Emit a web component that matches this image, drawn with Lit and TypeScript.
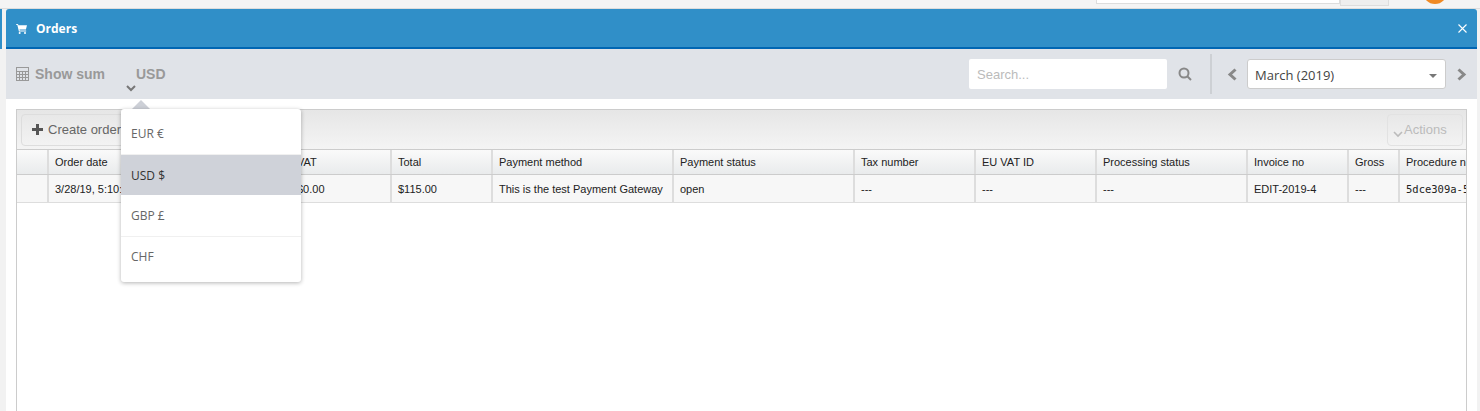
import { LitElement, html, css } from "lit";
import { customElement } from "lit/decorators.js";

const cols: [string, string, number][] = [
  ["", "", 32],
  ["Order date", "3/28/19, 5:10:", 242],
  ["VAT", "$0.00", 101],
  ["Total", "$115.00", 101],
  ["Payment method", "This is the test Payment Gateway", 181],
  ["Payment status", "open", 181],
  ["Tax number", "---", 121],
  ["EU VAT ID", "---", 121],
  ["Processing status", "---", 151],
  ["Invoice no", "EDIT-2019-4", 101],
  ["Gross", "---", 51],
  ["Procedure no", "5dce309a-5", 80],
];

@customElement("app-root")
export class AppRoot extends LitElement {
  static styles = css`
    :host { display: block; width: 1480px; height: 411px; overflow: hidden; position: relative; background: #f2f2f2; font-family: "Liberation Sans", Arial, sans-serif; }
    .top { height: 8px; background: #f4f4f4; border-bottom: 1px solid #ddd; position: relative; }
    .tinput { position: absolute; left: 1096px; top: -5px; width: 244px; height: 9px; background: #fff; border: 1px solid #ddd; box-sizing: border-box; }
    .tbtn { position: absolute; left: 1340px; top: -5px; width: 49px; height: 11px; background: #eee; border: 1px solid #ddd; box-sizing: border-box; }
    .avatar { position: absolute; left: 1423px; top: -20px; width: 24px; height: 24px; border-radius: 50%; background: #f08a24; }
    .edge { position: absolute; left: 0; top: 9px; width: 2px; height: 40px; background: #308fc8; }
    .window { margin: 0 0 0 6px; width: 1474px; box-sizing: border-box; }
    .win { width: 1471px; }
    .head { height: 38px; background: #308fc8; border-bottom: 2px solid #0066b3; border-radius: 3px 3px 0 0; display: flex; align-items: center; color: #fff; font-family: "Open Sans", sans-serif; font-weight: 700; font-size: 12px; padding: 0 10px 0 10px; box-sizing: content-box; }
    .head .t { margin-left: 9px; flex: 1; }
    .bar { height: 50px; background: #e0e3e8; display: flex; align-items: center; padding: 0 10px; box-sizing: border-box; color: #999; font-weight: 700; font-size: 14px; }
    .sum { display: flex; align-items: center; gap: 6px; width: 120px; }
    .cur { position: relative; width: 120px; }
    .chev { position: absolute; left: -10px; top: 19px; }
    .spacer { flex: 1; }
    .search { width: 198px; height: 30px; background: #fff; border-radius: 2px; color: #bbb; font-weight: 400; font-size: 13px; display: flex; align-items: center; padding-left: 8px; box-sizing: border-box; }
    .mag { margin: 0 18px 0 11px; }
    .sep { width: 2px; height: 40px; background: #cdd0d4; margin-right: 15px; }
    .sel { width: 199px; height: 30px; margin: 0 11px 0 10px; background: #fff; border: 1px solid #ccc; border-radius: 3px; box-sizing: border-box; display: flex; align-items: center; justify-content: space-between; padding: 1px 8px 0 7px; color: #444; font-family: "Open Sans", sans-serif; font-weight: 400; font-size: 13px; }
    .caret { width: 0; height: 0; border: 4px solid transparent; border-top: 4px solid #777; border-bottom: 0; margin-top: 2px; }
    .body { height: 313px; background: #fff; padding: 10px 10px 0 10px; box-sizing: border-box; }
    .grid { height: 303px; width: 1451px; border: 1px solid #ccc; border-bottom: 0; box-sizing: border-box; overflow: hidden; }
    .tool { height: 39px; background: linear-gradient(#e6e6e6, #f4f4f4); border-bottom: 1px solid #ccc; display: flex; align-items: center; justify-content: space-between; padding: 0 3px 0 4px; }
    .btn { height: 32px; box-sizing: border-box; border: 1px solid #ddd; border-radius: 4px; display: flex; align-items: center; color: #666; font-size: 13px; padding: 0 10px; gap: 5px; width: 130px; }
    .actions { width: 76px; color: #bbb; border-color: #e2e2e2; gap: 1px; padding: 0 0 0 5px; }
    .actions svg { margin-top: 10px; }
    .row { display: flex; height: 24px; border-bottom: 1px solid #ccc; font-size: 11px; color: #222; }
    .row.h { background: linear-gradient(#fafafa, #e9ebec); }
    .row.d { background: #f7f7f7; height: 27px; border-bottom-color: #ddd; }
    .c { flex: none; box-sizing: border-box; border-right: 2px solid #ddd; padding-left: 6px; display: flex; align-items: center; white-space: nowrap; overflow: hidden; }
    .mono { font-family: "DejaVu Sans Mono", monospace; font-size: 10.5px; }
    .menu { position: absolute; left: 121px; top: 109px; width: 180px; height: 173px; background: #fff; border-radius: 3px; box-shadow: 0 1px 4px rgba(0,0,0,.3); padding-top: 4px; box-sizing: border-box; font-family: "Open Sans", sans-serif; font-size: 12px; color: #666; }
    .arrow { position: absolute; left: 132px; top: 100px; width: 0; height: 0; border: 9px solid transparent; border-bottom: 9px solid #cdd0d7; border-top: 0; }
    .item { height: 42px; display: flex; align-items: center; padding: 0 0 0 10px; box-sizing: border-box; border-bottom: 1px solid #f0f0f0; }
    .item.on { height: 40px; background: #cfd2d9; color: #333; border: 0; }
    .item.last { height: 41px; border: 0; padding-bottom: 2px; }
  `;

  render() {
    return html`
      <div class="top"><div class="tinput"></div><div class="tbtn"></div><div class="avatar"></div></div>
      <div class="edge"></div>
      <div class="window">
        <div class="win">
          <div class="head">
            <svg width="11" height="11" viewBox="0 0 12 12" fill="#fff"><path d="M0 1h2.2l.4 1.4H12l-1.2 4.8H3.8l.3 1.1h7v1H3.2L1.4 2H0z"/><circle cx="4" cy="10.8" r="1.1"/><circle cx="9.8" cy="10.8" r="1.1"/></svg>
            <span class="t">Orders</span>
            <svg width="9" height="9" viewBox="0 0 9 9" stroke="#fff" stroke-width="1.1"><path d="M.5.5l8 8M8.5.5l-8 8"/></svg>
          </div>
          <div class="bar">
            <div class="sum">
              <svg width="13" height="14" viewBox="0 0 13 14" fill="none" stroke="#999"><rect x=".5" y=".5" width="12" height="13"/><path d="M.5 4.5h12M.5 7.5h12M.5 10.5h12M3.5 4.5v9M6.5 4.5v9M9.5 4.5v9"/></svg>
              <span>Show sum</span>
            </div>
            <div class="cur">USD
              <svg class="chev" width="10" height="7" viewBox="0 0 10 7" fill="none" stroke="#777" stroke-width="2"><path d="M1 1l4 4 4-4"/></svg>
            </div>
            <div class="spacer"></div>
            <div class="search">Search...</div>
            <svg class="mag" width="14" height="14" viewBox="0 0 14 14" fill="none" stroke="#888" stroke-width="2"><circle cx="6" cy="6" r="4.5"/><path d="M9.5 9.5L13 13"/></svg>
            <div class="sep"></div>
            <svg width="10" height="13" viewBox="0 0 10 13" fill="none" stroke="#888" stroke-width="3"><path d="M8.5 1.5L3 6.5l5.5 5"/></svg>
            <div class="sel">March (2019)<span class="caret"></span></div>
            <svg width="10" height="13" viewBox="0 0 10 13" fill="none" stroke="#888" stroke-width="3"><path d="M1.5 1.5L7 6.5l-5.5 5"/></svg>
          </div>
          <div class="body">
            <div class="grid">
              <div class="tool">
                <div class="btn">
                  <svg width="11" height="11" viewBox="0 0 11 11" fill="#555"><path d="M4 0h3v4h4v3H7v4H4V7H0V4h4z"/></svg>
                  Create order
                </div>
                <div class="btn actions">
                  <svg width="10" height="7" viewBox="0 0 10 7" fill="none" stroke="#bbb" stroke-width="1.6"><path d="M1 1l4 4 4-4"/></svg>
                  Actions
                </div>
              </div>
              <div class="row h">${cols.map((c) => html`<div class="c" style="width:${c[2]}px">${c[0]}</div>`)}</div>
              <div class="row d">${cols.map((c, i) => html`<div class="c ${i === 11 ? "mono" : ""}" style="width:${c[2]}px">${c[1]}</div>`)}</div>
            </div>
          </div>
        </div>
      </div>
      <div class="arrow"></div>
      <div class="menu">
        <div class="item">EUR €</div>
        <div class="item on">USD $</div>
        <div class="item">GBP £</div>
        <div class="item last">CHF</div>
      </div>
    `;
  }
}
